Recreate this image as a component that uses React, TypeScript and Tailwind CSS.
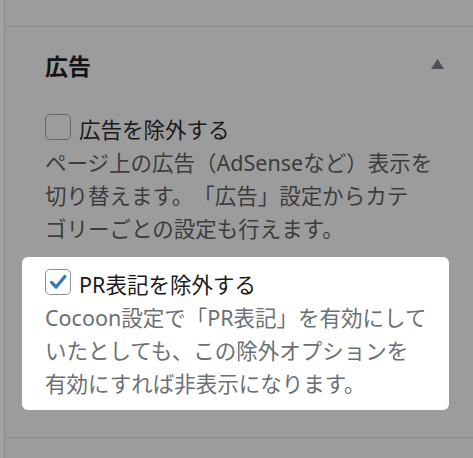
import React from "react";

const font = { fontFamily: '"Noto Sans", "Noto Sans CJK JP", sans-serif' };

function Box({ checked }: { checked?: boolean }) {
  return (
    <div
      className={
        "mt-[1px] w-[26px] h-[26px] shrink-0 rounded-[5px] border-[1.5px] flex items-center justify-center " +
        (checked ? "bg-white border-[#8c8f94]" : "border-[#666666]")
      }
    >
      {checked && (
        <svg width="22" height="22" viewBox="0 0 24 24">
          <path d="M5 12.5 L10 17.5 L19.5 6" fill="none" stroke="#2a76c0" strokeWidth="3.4" strokeLinecap="round" strokeLinejoin="round" />
        </svg>
      )}
    </div>
  );
}

export default function App() {
  return (
    <div className="w-[473px] h-[458px] bg-[#9c9c9c] flex overflow-hidden [text-spacing-trim:space-all]" style={font}>
      <div className="w-[5px] bg-[#a2a2a2] border-r border-[#8a8a8a]" />
      <div className="flex-1 flex flex-col">
        <div className="h-[27px] shrink-0 border-b border-[#8a8a8a]" />
        <div className="pl-[40px] pr-[29px] pt-[24px] pb-[27px] border-b border-[#8a8a8a]">
          <div className="flex items-center justify-between h-[30px]">
            <div className="text-[23px] font-bold leading-[30px] text-[#141414]">広告</div>
            <svg width="13" height="10" viewBox="0 0 13 10" className="-mt-[4px]">
              <path d="M6.5 0 L13 10 L0 10 Z" fill="#4d5156" />
            </svg>
          </div>
          <div className="mt-[32px]">
            <div className="flex gap-[8px]">
              <Box />
              <div className="text-[21.5px] leading-[33px] text-[#1a1a1a]">広告を除外する</div>
            </div>
            <div className="text-[21.5px] leading-[33px] text-[#3c3c3c] whitespace-nowrap">
              ページ上の広告（AdSenseなど）表示を
              <br />
              切り替えます。「広告」設定からカテ
              <br />
              ゴリーごとの設定も行えます。
            </div>
          </div>
          <div className="mt-[12px] -ml-[23px] mr-[-5px] bg-white rounded-[6px] pl-[23px] pt-[11px] pb-[10px]">
            <div className="flex gap-[8px]">
              <Box checked />
              <div className="text-[21.5px] leading-[33px] text-[#1a1a1a]">PR表記を除外する</div>
            </div>
            <div className="text-[21.5px] leading-[33px] text-[#6c7075] whitespace-nowrap">
              Cocoon設定で「PR表記」を有効にして
              <br />
              いたとしても、この除外オプションを
              <br />
              有効にすれば非表示になります。
            </div>
          </div>
        </div>
        <div className="flex-1" />
      </div>
    </div>
  );
}
